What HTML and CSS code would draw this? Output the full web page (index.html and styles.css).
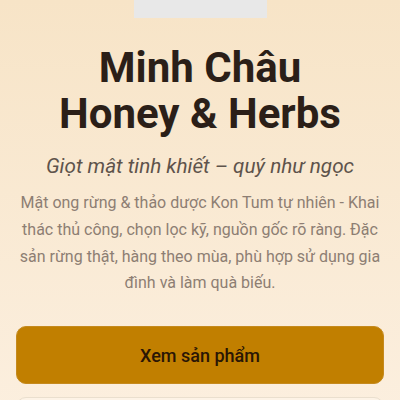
FILE: index.html
```html
<!DOCTYPE html>
<html lang="vi">
<head>
<meta charset="utf-8">
<link rel="stylesheet" href="styles.css">
</head>
<body>
<main class="hero">
  <div class="logo-box"></div>
  <h1 class="title">Minh Châu<br>Honey &amp; Herbs</h1>
  <p class="tagline">Giọt mật tinh khiết – quý như ngọc</p>
  <p class="desc">Mật ong rừng &amp; thảo dược Kon Tum tự nhiên - Khai thác thủ công, chọn lọc kỹ, nguồn gốc rõ ràng. Đặc sản rừng thật, hàng theo mùa, phù hợp sử dụng gia đình và làm quà biếu.</p>
  <div class="actions">
    <a class="btn btn-primary" href="#">Xem sản phẩm</a>
    <a class="btn btn-outline" href="#">Liên hệ đặt hàng</a>
  </div>
</main>
</body>
</html>
```
FILE: styles.css
```css
html, body {
  margin: 0;
  padding: 0;
}
body {
  font-family: Roboto, "Noto Sans", sans-serif;
  background: linear-gradient(180deg, #f7e4c7 0%, #fcf0e1 100%);
  min-height: 400px;
  overflow: hidden;
}
.hero {
  display: flex;
  flex-direction: column;
  align-items: center;
  padding: 0 16px;
  text-align: center;
}
.logo-box {
  width: 133px;
  height: 18px;
  background: #e8e8e8;
}
.title {
  margin: 27px 0 0;
  font-size: 42px;
  line-height: 1.1;
  font-weight: 700;
  color: #2b1f18;
}
.tagline {
  margin: 17px 0 0;
  font-size: 20.7px;
  font-style: italic;
  color: #5e534b;
  line-height: 1.25;
}
.desc {
  margin: 10px 0 0;
  font-size: 16px;
  line-height: 1.67;
  color: #8d7e73;
}
.actions {
  align-self: stretch;
  display: flex;
  flex-direction: column;
  gap: 13px;
  margin-top: 29px;
}
.btn {
  display: flex;
  align-items: center;
  justify-content: center;
  height: 58px;
  border-radius: 10px;
  text-decoration: none;
  font-size: 18px;
  font-weight: 500;
  box-sizing: border-box;
}
.btn-primary {
  background: #c17f00;
  color: #2a1605;
  border: 1px solid #c58a1e;
}
.btn-outline {
  background: #fdf3e6;
  color: #2a1605;
  border: 1px solid #eadfce;
}
```
